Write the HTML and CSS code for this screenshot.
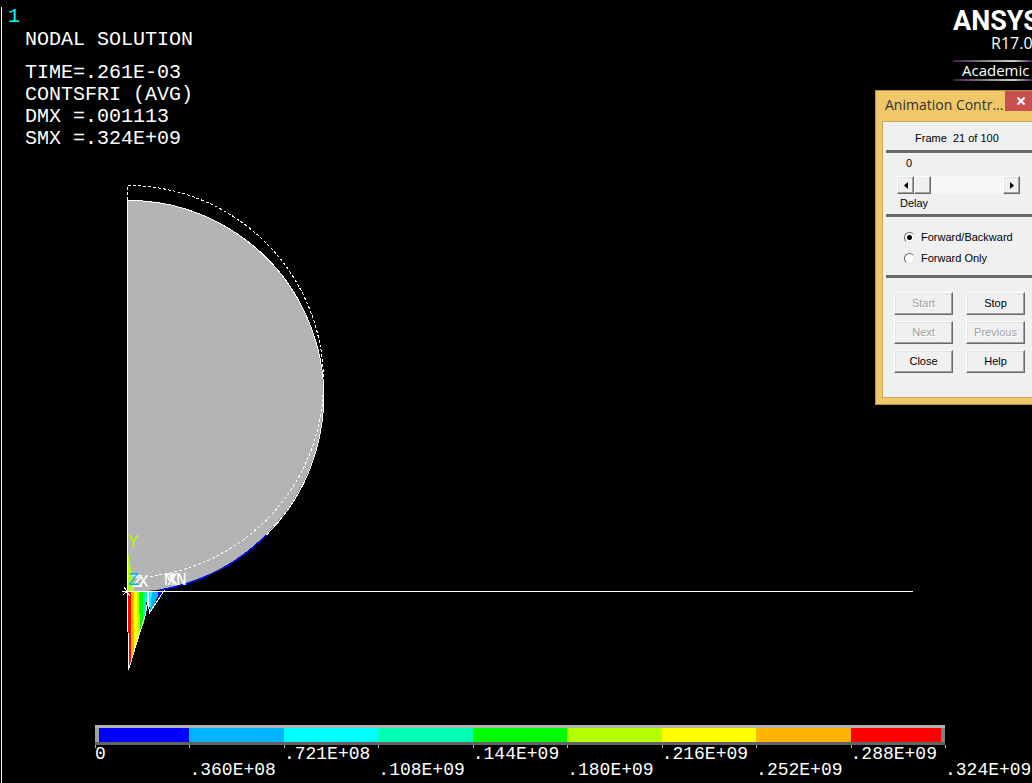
FILE: index.html
```html
<!DOCTYPE html>
<html lang="en">
<head>
<meta charset="utf-8">
<title>Nodal Solution</title>
<link rel="stylesheet" href="styles.css">
</head>
<body>
<main class="window">
  <header class="top">
    <section class="info">
      <p class="window-number">1</p>
      <div class="readout">
        <h1 class="heading">NODAL SOLUTION</h1>
        <p>TIME=.261E-03</p>
        <p>CONTSFRI (AVG)</p>
        <p>DMX =.001113</p>
        <p>SMX =.324E+09</p>
      </div>
    </section>
    <section class="brand">
      <strong class="brand-name">ANSYS</strong>
      <span class="brand-release">R17.0</span>
      <span class="brand-edition">Academic</span>
    </section>
  </header>

  <svg class="plot" viewBox="2 160 1030 520" role="img" aria-label="Contact friction stress contour plot">
    <path class="body" d="M128 200A195.500 196 0 0 1 128 592Z"/>
    <g shape-rendering="crispEdges">
      <path class="edge" d="M127.500 592V200.500A195.500 196 0 0 1 266.500 535"/>
      <path class="contact" d="M266.500 535A195.500 196 0 0 1 160 590"/>
      <path class="undeformed" d="M127.500 200V185.500A196 196 0 0 1 323.500 381.500A196 196 0 0 1 135 577.500"/>
      <path fill="#ff0000" d="M128 592H132L132.500 655L128.500 669Z"/>
      <path fill="#ffb400" d="M131 592H135V650L131.500 661Z"/>
      <path fill="#ffff00" d="M134 592H138L139 636L134 653Z"/>
      <path fill="#b4ff00" d="M137 592H140L141 630L138 641Z"/>
      <path fill="#00ff00" d="M139 592H143L144 620L140 634Z"/>
      <path fill="#00ffb4" d="M142.500 592H147L146 613L143.500 624Z"/>
      <path fill="#00ffff" d="M148 592H153L152 609L149 607Z"/>
      <path fill="#00b4ff" d="M152 592H160L152 609L150 612Z"/>
      <path fill="#0000ff" d="M158 592H164L159 600Z"/>
      <path class="edge" d="M127.500 592L128.500 670L136 645L145 616L147.500 603V592M148.500 592V604L149.500 613L164.500 590"/>
      <path class="edge" d="M122 591.500H913M123 595L132 587M124 587L130 596"/>
      <path fill="#b4ff00" d="M128 552L130 564L133 579L134 591H128Z"/>
    </g>
    <g class="marks">
      <text x="128" y="547" fill="#b4ff00">Y</text>
      <text x="138" y="587" fill="#fff">X</text>
      <text x="132" y="587" fill="#fff">Z</text>
      <text x="128" y="585" fill="#00b4ff">Z</text>
      <text x="164" y="585" fill="#fff">M</text>
      <text x="167" y="585" fill="#fff">X</text>
      <text x="176" y="585" fill="#fff">N</text>
    </g>
  </svg>

  <section class="legend">
    <div class="legend-bar">
      <i class="c1"></i><i class="c2"></i><i class="c3"></i><i class="c4"></i><i class="c5"></i><i class="c6"></i><i class="c7"></i><i class="c8"></i><i class="c9"></i>
    </div>
    <div class="legend-labels">
      <span>0</span><span>.360E+08</span><span>.721E+08</span><span>.108E+09</span><span>.144E+09</span><span>.180E+09</span><span>.216E+09</span><span>.252E+09</span><span>.288E+09</span><span>.324E+09</span>
    </div>
  </section>

  <section class="dialog" role="dialog" aria-labelledby="dialog-title">
    <div class="title-bar">
      <h2 class="title" id="dialog-title">Animation Contr...</h2>
      <button class="close" type="button" aria-label="Close window">
        <svg width="8" height="8" viewBox="0 0 8 8"><path d="M.5.5L7.500 7.500M7.500.5L.5 7.500" stroke="#fff" stroke-width="2"/></svg>
      </button>
    </div>
    <form class="panel">
      <p class="frame">Frame&nbsp; 21 of 100</p>
      <div class="delay">
        <output class="delay-value" for="delay">0</output>
        <div class="scroll">
          <button class="arrow" type="button" aria-label="Decrease"><svg width="4" height="7" viewBox="0 0 4 7"><path d="M4 0V7L0 3.500Z"/></svg></button>
          <input class="range" id="delay" type="range" min="0" max="100" value="0">
          <button class="arrow" type="button" aria-label="Increase"><svg width="4" height="7" viewBox="0 0 4 7"><path d="M0 0V7L4 3.500Z"/></svg></button>
        </div>
        <label class="delay-label" for="delay">Delay</label>
      </div>
      <div class="modes">
        <label class="mode"><input type="radio" name="mode" checked>Forward/Backward</label>
        <label class="mode"><input type="radio" name="mode">Forward Only</label>
      </div>
      <div class="actions">
        <button class="action" type="button" disabled>Start</button>
        <button class="action" type="button">Stop</button>
        <button class="action" type="button" disabled>Next</button>
        <button class="action" type="button" disabled>Previous</button>
        <button class="action" type="button">Close</button>
        <button class="action" type="button">Help</button>
      </div>
    </form>
  </section>
</main>
</body>
</html>
```

FILE: styles.css
```css
* { box-sizing: border-box; }

body {
  margin: 0;
  padding: 7px 0 0 1px;
  min-height: 100vh;
  display: flex;
  background: #000;
  color: #fff;
  font-family: "Liberation Mono", "Courier New", monospace;
  overflow: hidden;
}

p, h1, h2 { margin: 0; font-weight: normal; }

.window {
  flex: 1;
  min-width: 0;
  border-left: 1px solid #fff;
  display: flex;
  flex-direction: column;
}

/* Header */
.top {
  display: flex;
  justify-content: space-between;
  height: 153px;
}
.info { font-size: 20px; line-height: 22px; padding-left: 6px; }
.window-number { color: #00ffff; line-height: 20px; }
.readout { padding: 2px 0 0 17px; }
.heading { font-size: 20px; margin-bottom: 11px; }

.brand {
  width: 79px;
  font-family: "Open Sans", "Noto Sans", sans-serif;
  white-space: nowrap;
  display: flex;
  flex-direction: column;
}
.brand-name { font: bold 27px/28px Roboto, sans-serif; }
.brand-release { font-size: 16px; line-height: 16px; padding-left: 38px; }
.brand-edition {
  margin-top: 9px;
  padding-left: 9px;
  font-size: 15px;
  line-height: 17px;
  border: solid;
  border-width: 2px 0;
  border-image: linear-gradient(90deg, #401050, #999 50%, #ccc 75%, #401050) 2;
}

/* Plot */
.plot { display: block; width: 100%; }
.body { fill: #b4b4b4; }
.edge { fill: none; stroke: #fff; }
.contact { fill: none; stroke: #0000ff; stroke-width: 1.500; }
.undeformed { fill: none; stroke: #fff; stroke-dasharray: 3 2; }
.marks { font-size: 18px; }

/* Legend */
.legend { margin: 45px 87px 0 93px; }
.legend-bar, .legend-labels { display: grid; grid-template-columns: repeat(9, 1fr) 0; }
.legend-bar {
  grid-template-columns: repeat(9, 1fr);
  border-top: 3px solid #b4b4b4;
  border-bottom: 3px solid #646464;
}
.legend-bar i { height: 14px; }
.c1 { background: #0000ff; border-left: 4px solid #a0a0a0; }
.c2 { background: #00b4ff; }
.c3 { background: #00ffff; }
.c4 { background: #00ffb4; }
.c5 { background: #00ff00; }
.c6 { background: #b4ff00; }
.c7 { background: #ffff00; }
.c8 { background: #ffb400; }
.c9 { background: #ff0000; border-right: 4px solid #808080; }
.legend-labels { font-size: 18px; line-height: 18px; white-space: nowrap; }
.legend-labels span { min-width: 0; }
.legend-labels span::before {
  content: "";
  display: block;
  width: 1px;
  height: 3px;
  margin-bottom: -3px;
  background: #b4b4b4;
}
.legend-labels span:nth-child(even)::before { margin-bottom: 13px; }

/* Animation dialog */
.dialog {
  position: absolute;
  top: 90px;
  left: calc(100% - 157px);
  width: 176px;
  padding: 0 6px 6px;
  background: #f0c869;
  border: 1px solid #b5914a;
  color: #000;
  font: 11px/14px "Liberation Sans", Arial, sans-serif;
}
.title-bar { display: flex; height: 30px; align-items: flex-start; }
.title {
  width: 123px;
  padding-left: 3px;
  font: 14px/28px "Open Sans", "Noto Sans", sans-serif;
  color: #333;
  white-space: nowrap;
}
.close {
  width: 34px;
  height: 20px;
  padding: 0 0 0 12px;
  border: 0;
  background: #c75050;
  text-align: left;
}
.close svg { display: block; }
.panel {
  padding: 0 3px 24px;
  background: #f0f0f0;
  border: 1px solid #c9a75a;
}
.frame { padding: 9px 0 5px 29px; border-bottom: 3px solid #696969; }
.delay { padding: 3px 0 4px 11px; border-bottom: 3px solid #696969; }
.delay-value { display: block; padding-left: 9px; }
.scroll { display: flex; width: 123px; height: 18px; margin: 6px 0 2px; }
.arrow, .action {
  background: #f0f0f0;
  border: 1px solid;
  border-color: #fff #696969 #696969 #fff;
  box-shadow: inset -1px -1px #a0a0a0, inset 1px 1px #e3e3e3;
}
.arrow {
  width: 17px;
  padding: 0;
  display: flex;
  align-items: center;
  justify-content: center;
}
.range {
  appearance: none;
  flex: 1;
  min-width: 0;
  margin: 0;
  background: repeating-conic-gradient(#fff 0 25%, #f0f0f0 0 50%) 0 0 / 2px 2px;
}
.range::-webkit-slider-thumb {
  appearance: none;
  width: 17px;
  height: 18px;
  background: #f0f0f0;
  border: 1px solid;
  border-color: #fff #696969 #696969 #fff;
  box-shadow: inset -1px -1px #a0a0a0;
}
.delay-label { display: block; padding-left: 3px; }
.modes {
  display: grid;
  gap: 7px;
  padding: 13px 0 10px 18px;
  border-bottom: 3px solid #696969;
}
.mode { display: flex; align-items: center; gap: 6px; }
.mode input {
  appearance: none;
  width: 11px;
  height: 11px;
  margin: 0;
  border: 1px solid;
  border-color: #696969 #e3e3e3 #e3e3e3 #696969;
  border-radius: 50%;
  background: #fff;
}
.mode input:checked { background: radial-gradient(#000 0 2px, #fff 3px); }
.actions {
  display: grid;
  grid-template-columns: 59px 59px;
  gap: 6px 13px;
  padding: 14px 0 0 8px;
}
.action { height: 23px; padding: 0 0 2px; font: inherit; color: #000; }
.action:disabled { color: #a0a0a0; text-shadow: 1px 1px #fff; }
```
